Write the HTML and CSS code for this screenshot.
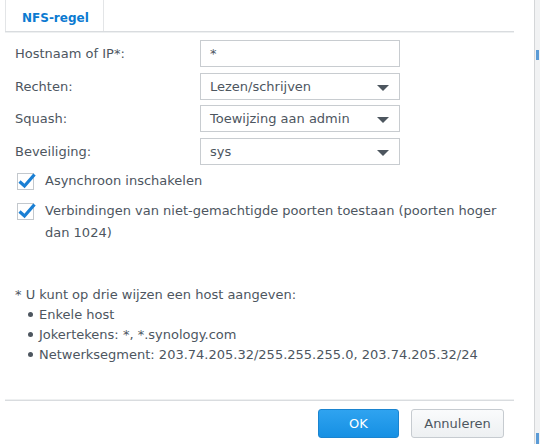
FILE: index.html
```html
<!DOCTYPE html>
<html>
<head>
<meta charset="utf-8">
<link rel="stylesheet" href="styles.css">
</head>
<body>
<div class="screen">
  <div class="dialog">
    <div class="tabbar">
      <div class="tab">NFS-regel</div>
    </div>
    <div class="form">
      <div class="row">
        <label class="lbl">Hostnaam of IP*:</label>
        <div class="field">*</div>
      </div>
      <div class="row">
        <label class="lbl">Rechten:</label>
        <div class="field select">Lezen/schrijven<span class="caret"></span></div>
      </div>
      <div class="row">
        <label class="lbl">Squash:</label>
        <div class="field select">Toewijzing aan admin<span class="caret"></span></div>
      </div>
      <div class="row">
        <label class="lbl">Beveiliging:</label>
        <div class="field select">sys<span class="caret"></span></div>
      </div>
      <div class="check first">
        <span class="box"><svg width="18" height="16" viewBox="0 0 18 16"><path d="M1.5 8.5 L6.5 13 L16.5 1.5" fill="none" stroke="#1a7fd4" stroke-width="3.2" stroke-linejoin="miter"/></svg></span>
        <span class="ctext">Asynchroon inschakelen</span>
      </div>
      <div class="check">
        <span class="box"><svg width="18" height="16" viewBox="0 0 18 16"><path d="M1.5 8.5 L6.5 13 L16.5 1.5" fill="none" stroke="#1a7fd4" stroke-width="3.2" stroke-linejoin="miter"/></svg></span>
        <span class="ctext">Verbindingen van niet-gemachtigde poorten toestaan (poorten hoger dan 1024)</span>
      </div>
      <div class="note">
        <p>* U kunt op drie wijzen een host aangeven:</p>
        <ul>
          <li>Enkele host</li>
          <li>Jokertekens: *, *.synology.com</li>
          <li>Netwerksegment: 203.74.205.32/255.255.255.0, 203.74.205.32/24</li>
        </ul>
      </div>
    </div>
    <div class="footer">
      <button class="btn ok">OK</button>
      <button class="btn cancel">Annuleren</button>
    </div>
  </div>
  <div class="side">
    <span class="mark m1"></span>
    <span class="mark m2"></span>
  </div>
</div>
</body>
</html>
```
FILE: styles.css
```css
* { box-sizing: border-box; }
html, body { margin: 0; padding: 0; background: #fff; }
body {
  font-family: "DejaVu Sans", Verdana, sans-serif;
  font-size: 13px;
  color: #4d565f;
  width: 540px;
  height: 444px;
  overflow: hidden;
}
.screen { display: flex; height: 444px; }
.dialog {
  width: 535px;
  display: flex;
  flex-direction: column;
  border-right: 1px solid #d4d6d8;
  background: #fff;
}
.side {
  flex: 1;
  background: #f1f2f3;
  position: relative;
}
.mark { position: absolute; left: 1px; width: 3px; background: #5b9bd6; }
.m1 { top: 50px; height: 10px; }
.m2 { top: 433px; height: 11px; }

.tabbar {
  margin: 0 20px 0 5px;
  height: 32px;
  border-bottom: 1px solid #d9dcdf;
  box-shadow: 0 1px 0 #eef0f1;
  display: flex;
}
.tab {
  width: 99px;
  height: 31px;
  border-left: 1px solid #e3e5e7;
  border-right: 1px solid #e3e5e7;
  color: #0b7ad1;
  font-weight: bold;
  font-size: 12px;
  padding: 11px 0 0 16px;
}

.form { padding: 8px 0 0 15px; flex: 1; }
.row {
  display: flex;
  align-items: center;
  height: 27px;
  margin-bottom: 5.5px;
}
.lbl { width: 185px; }
.field {
  width: 200px;
  height: 27px;
  border: 1px solid #c8ccd0;
  padding: 0 0 0 9px;
  display: flex;
  align-items: center;
  position: relative;
}
.select .caret {
  position: absolute;
  right: 10px;
  top: 11px;
  width: 0; height: 0;
  border-left: 6px solid transparent;
  border-right: 6px solid transparent;
  border-top: 6px solid #4d565f;
}
.check {
  display: flex;
  align-items: flex-start;
  margin-top: 10px;
  padding-left: 2px;
}
.check.first { margin-top: 7px; }
.box {
  width: 17px; height: 17px;
  border: 1px solid #c3c8cd;
  background: #fff;
  flex: none;
  position: relative;
  margin-top: 1px;
}
.box svg { position: absolute; left: 0; top: -1px; }
.ctext {
  margin-left: 11px;
  line-height: 22px;
  width: 462px;
  margin-top: -2px;
}
.note { margin-top: 41px; line-height: 20px; }
.note p { margin: 0; }
.note ul { margin: 0; padding: 0 0 0 13px; list-style: none; }
.note li::before {
  content: "";
  display: inline-block;
  width: 5px; height: 5px;
  border-radius: 50%;
  background: #4d565f;
  margin-right: 6px;
  vertical-align: 2px;
}
.footer {
  margin: 0 20px 0 5px;
  height: 44px;
  border-top: 1px solid #d9dcdf;
  box-shadow: 0 -1px 0 #eef0f1;
  display: flex;
  justify-content: flex-end;
  align-items: flex-start;
  padding-top: 8px;
  gap: 12px;
}
.btn {
  font-family: "DejaVu Sans", Verdana, sans-serif;
  font-size: 13px;
  height: 29px;
  border-radius: 3px;
  padding: 0;
}
.ok {
  width: 81px;
  color: #fff;
  background: linear-gradient(#2fa3f0, #1690e3);
  border: 1px solid #1a84d0;
}
.cancel {
  width: 93px;
  color: #4d565f;
  background: linear-gradient(#fafbfc, #edf0f2);
  border: 1px solid #c6cbd0;
  margin-right: 10px;
}
```
